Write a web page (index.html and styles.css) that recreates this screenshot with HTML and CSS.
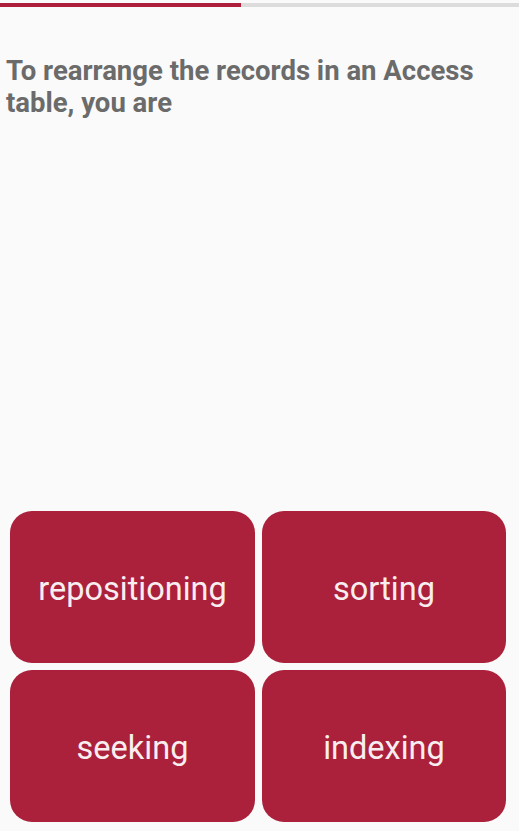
FILE: index.html
```html
<!DOCTYPE html>
<html>
<head>
<meta charset="utf-8">
<link rel="stylesheet" href="styles.css">
</head>
<body>
<div class="screen">
  <div class="progress"><div class="progress-fill" style="width:46.5%"></div></div>
  <h1 class="question">To rearrange the records in an Access table, you are</h1>
  <div class="answers">
    <button class="answer">repositioning</button>
    <button class="answer">sorting</button>
    <button class="answer">seeking</button>
    <button class="answer">indexing</button>
  </div>
</div>
</body>
</html>
```
FILE: styles.css
```css
html, body {
  margin: 0;
  padding: 0;
  background: #fafafa;
}
.screen {
  height: 831px;
  display: flex;
  flex-direction: column;
  font-family: Roboto, "Noto Sans", sans-serif;
}
.progress {
  margin-top: 3px;
  height: 4px;
  background: #dcdcdc;
}
.progress-fill {
  height: 100%;
  background: #ad1f3a;
}
.question {
  margin: 48px 0 0 0;
  padding: 0 30px 0 6px;
  font-size: 27.5px;
  line-height: 32px;
  font-weight: 700;
  color: #6b6b6b;
}
.answers {
  margin-top: auto;
  display: grid;
  grid-template-columns: 245px 244px;
  grid-auto-rows: 152px;
  gap: 7px;
  padding: 0 0 9px 10px;
}
.answer {
  border: none;
  border-radius: 22px;
  background: #ab203a;
  color: #f8eef0;
  font-family: Roboto, "Noto Sans", sans-serif;
  font-size: 32.5px;
  font-weight: 400;
  padding: 4px 0 0 0;
}
```
